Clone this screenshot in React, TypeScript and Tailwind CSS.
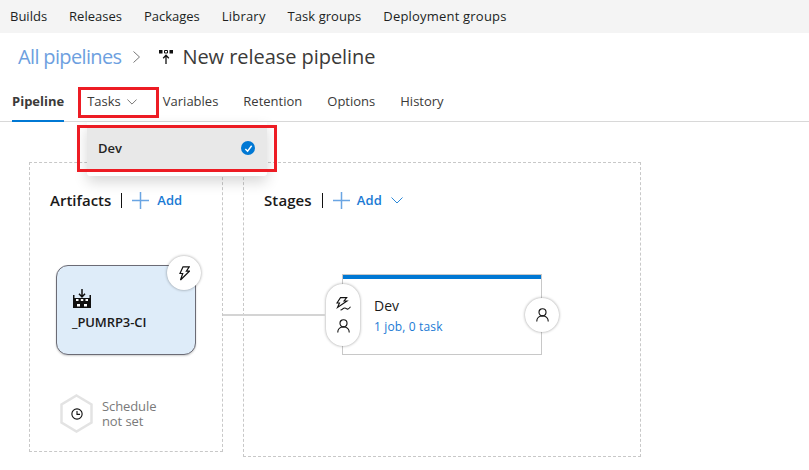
import React from "react";

const Bolt = ({ className = "" }: { className?: string }) => (
  <svg viewBox="0 0 11 15" className={className} fill="none" stroke="#111" strokeWidth="1.200">
    <path d="M4 .8h6.200L7.400 5.200h3L1.500 14l2.200-6.500H1z" />
  </svg>
);
const BoltLines = ({ className = "" }: { className?: string }) => (
  <svg viewBox="0 0 15 14" className={className} fill="none" stroke="#111" strokeWidth="1.100">
    <path d="M4.500.6h6.200L8 4h3L1.500 10.500 3.500 6H1z" />
    <path d="M4.500 13c2.500 0 2-2 4.300-2 1.700 0 1.700 1.500 3.200 1 1-.4 1.700-1.200 2.500-2.300" />
  </svg>
);
const Person = ({ className = "" }: { className?: string }) => (
  <svg viewBox="0 0 14 15" className={className} fill="none" stroke="#111" strokeWidth="1.200">
    <circle cx="7" cy="4.600" r="3.800" />
    <path d="M.8 14.500c0-3.600 2.500-6 6.200-6s6.200 2.400 6.200 6" />
  </svg>
);
const Plus = () => (
  <svg viewBox="0 0 17 17" className="w-[17px] h-[17px]" stroke="#6aa5e3" strokeWidth="1.500">
    <path d="M8.500 0v17M0 8.500h17" />
  </svg>
);
const Chevron = ({ className = "", color = "#605e5c" }: { className?: string; color?: string }) => (
  <svg viewBox="0 0 12 7" className={className} fill="none" stroke={color} strokeWidth="1">
    <path d="M.5.5 6 6 11.500.5" />
  </svg>
);
const PipelineIcon = () => (
  <svg viewBox="0 0 14 14" className="w-[14px] h-[14px]">
    <path d="M0 0h3.500v3.500H0zM10.500 0H14v3.500h-3.500z" fill="#111" />
    <path d="M5.500.5h3v2.500h-3z" fill="none" stroke="#111" />
    <path d="M7 14V5.500M4.200 8.200 7 5.300l2.800 2.900" fill="none" stroke="#111" strokeWidth="1.300" />
  </svg>
);
const BuildIcon = () => (
  <svg viewBox="0 0 18 19" className="w-[18px] h-[19px]">
    <path d="M9 0v7.500M6 4.800 9 8l3-3.200" fill="none" stroke="#111" strokeWidth="1.500" />
    <path d="M0 6h1.500v3H16.500V6H18v13H0z" fill="#111" />
    <path d="M3 10h2.500v2H3zM7.800 10h2.500v2H7.800zM12.500 10H15v2h-2.500zM4 15h3v2.500H4zM11 15h3v2.500h-3z" fill="#fff" />
  </svg>
);
const Clock = () => (
  <svg viewBox="0 0 14 14" className="w-[12px] h-[12px]" fill="none" stroke="#111" strokeWidth="1.300">
    <circle cx="7" cy="7" r="6" />
    <path d="M7 3.500V7.500H10.500" />
  </svg>
);
const Hexagon = () => (
  <svg viewBox="0 0 33 39" className="w-[33px] h-[39px]" fill="#fff" stroke="#e3e3e3" strokeWidth="2.500">
    <path d="M16.500 1.500 31.500 10.500V28.500L16.500 37.500 1.500 28.500V10.500z" />
  </svg>
);

const tabs = ["Variables", "Retention", "Options", "History"];

export default function App() {
  return (
    <div className="relative w-[809px] h-[470px] overflow-hidden bg-white font-['Open_Sans',sans-serif] text-[#252423]">
      <nav className="h-[33px] bg-[#f4f4f4] flex items-center gap-[22px] pl-[10px] text-[13px] text-[#201f1e]">
        <span>Builds</span>
        <span>Releases</span>
        <span>Packages</span>
        <span className="tracking-[0.2px]">Library</span>
        <span className="tracking-[0.05px]">Task groups</span>
        <span className="tracking-[0.2px]">Deployment groups</span>
      </nav>

      <header className="h-[48px] flex items-center pl-[18px]">
        <span className="text-[20px] tracking-[-0.65px] text-[#6d9fe0]">All pipelines</span>
        <svg viewBox="0 0 7 12" className="w-[7px] h-[12px] ml-[12px]" fill="none" stroke="#777" strokeWidth="1">
          <path d="M.5.500 6.500 6 .5 11.500" />
        </svg>
        <span className="ml-[19px] flex"><PipelineIcon /></span>
        <span className="ml-[9px] text-[20px] tracking-[-0.05px] text-[#3b3a39]">New release pipeline</span>
      </header>

      <div className="relative h-[41px] border-b border-[#d8d8d8] flex items-center pl-[12px] text-[13px] text-[#3b3a39]">
        <span className="h-full flex items-center border-b-2 border-[#0078d4] font-bold mb-[-1px] pt-[3px]">Pipeline</span>
        <div className="flex items-center pt-[2px]">
          <span className="flex items-center gap-[6px] ml-[23px]">
            Tasks
            <Chevron className="w-[10px] h-[6px]" />
          </span>
          <div className="flex gap-[25px] ml-[26px]">
            {tabs.map((t) => (
              <span key={t}>{t}</span>
            ))}
          </div>
        </div>
      </div>

      <main className="flex items-start gap-[20px] pl-[29px] pt-[40px]">
        <section className="relative w-[194px] h-[290px] border border-dashed border-[#c8c8c8] pl-[20px] pt-[26px]">
          <div className="flex items-center h-[22px] text-[15px] font-semibold text-[#1b1a19]">
            Artifacts
            <span className="w-px h-[15px] bg-[#111] mx-[10px]" />
            <Plus />
            <span className="ml-[8px] mt-[1px] text-[13px] font-semibold text-[#1a7ad4]">Add</span>
          </div>
          <div className="relative mt-[54px] ml-[6px] w-[140px] h-[90px] rounded-[12px] border border-[#6b6b75] bg-[#deecf9] pl-[16px] pt-[23px] shadow-[0_1px_2px_rgba(0,0,0,0.2)]">
            <BuildIcon />
            <div className="mt-[5px] ml-[-1px] text-[13px] tracking-[-0.1px] font-semibold text-[#1b1a19]">_PUMRP3-CI</div>
            <div className="absolute -right-[6px] -top-[10px] w-[34px] h-[34px] rounded-full bg-white shadow-[0_0_3px_rgba(0,0,0,0.4)] flex items-center justify-center">
              <Bolt className="w-[11px] h-[15px]" />
            </div>
          </div>
          <div className="flex items-center mt-[39px] ml-[10px]">
            <div className="relative w-[33px] h-[39px] flex items-center justify-center">
              <div className="absolute inset-0"><Hexagon /></div>
              <div className="relative flex"><Clock /></div>
            </div>
            <div className="ml-[9px] text-[13px] leading-[15px] tracking-[-0.1px] text-[#7a7a7a]">
              <div>Schedule</div>
              <div>not set</div>
            </div>
          </div>
        </section>

        <section className="relative w-[398px] h-[295px] border border-dashed border-[#c8c8c8] pl-[20px] pt-[26px]">
          <div className="flex items-center h-[22px] text-[15px] font-semibold tracking-[0.1px] text-[#1b1a19]">
            Stages
            <span className="w-px h-[15px] bg-[#111] mx-[10px]" />
            <Plus />
            <span className="ml-[7px] mt-[1px] text-[13px] font-semibold text-[#1a7ad4]">Add</span>
            <Chevron className="w-[12px] h-[7px] ml-[9px]" color="#2b88d8" />
          </div>
          <div className="absolute left-[99px] top-[112px] w-[198px] h-[79px] bg-white border-t-4 border-[#0078d4] shadow-[0_0_0_1px_#c8c8c8] pl-[31px] pt-[17px]">
            <div className="text-[14px] leading-[19px] text-[#1b1a19]">Dev</div>
            <div className="mt-[4px] text-[12px] leading-[16px] tracking-[0.15px] text-[#1a7ad4]">1 job, 0 task</div>
            <div className="absolute -right-[18px] top-[19px] w-[34px] h-[34px] rounded-full bg-white shadow-[0_0_3px_rgba(0,0,0,0.4)] flex items-center justify-center">
              <Person className="w-[13px] h-[14px]" />
            </div>
          </div>
          <div className="absolute left-[82px] top-[121px] w-[34px] h-[62px] rounded-full bg-white shadow-[0_0_3px_rgba(0,0,0,0.4)] flex flex-col items-center justify-center gap-[8px]">
            <BoltLines className="w-[15px] h-[14px]" />
            <Person className="w-[13px] h-[14px]" />
          </div>
        </section>
      </main>

      {/* connector */}
      <div className="absolute left-[223px] top-[314px] w-[102px] h-[2px] bg-[#d4d4d4]" />
      {/* tasks menu */}
      <div className="absolute left-[87px] top-[122px] w-[180px] h-[54px] rounded-b-[3px] bg-white shadow-[0_6px_14px_rgba(0,0,0,0.16)] pt-[5px]">
        <div className="h-[42px] bg-[#e8e8e8] flex items-center justify-between pl-[11px] pr-[12px]">
          <span className="pt-[2px] text-[13px] font-semibold text-[#252423]">Dev</span>
          <span className="w-[14px] h-[14px] rounded-full bg-[#0078d4] flex items-center justify-center">
            <svg viewBox="0 0 10 10" className="w-[9px] h-[9px]" fill="none" stroke="#fff" strokeWidth="1.600">
              <path d="M1.500 5.500 4 8l4.500-6" />
            </svg>
          </span>
        </div>
      </div>
      {/* annotation frames */}
      <div className="absolute left-[78px] top-[87px] w-[81px] h-[31px] border-[3px] border-[#ed1c24]" />
      <div className="absolute left-[77px] top-[125px] w-[200px] h-[47px] border-[3px] border-[#ed1c24]" />
    </div>
  );
}
